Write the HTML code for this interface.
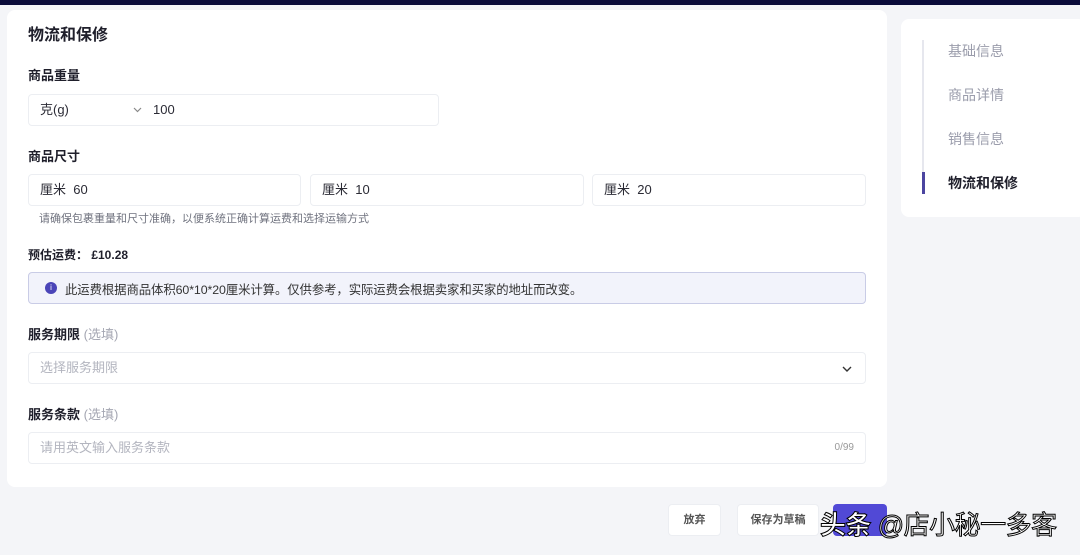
<!DOCTYPE html>
<html><head><meta charset="utf-8"><style>
*{box-sizing:border-box;margin:0;padding:0}
body{width:1080px;height:555px;overflow:hidden;background:#f4f5f8;font-family:"Liberation Sans","Noto Sans CJK SC",sans-serif;color:#222;position:relative}
.top{position:absolute;left:0;top:0;width:1080px;height:5px;background:#0b0c3a}
.card{position:absolute;left:7px;top:10px;width:880px;height:477px;background:#fff;border-radius:8px}
.abs{position:absolute}
h2{position:absolute;left:28px;top:26px;font-size:16px;font-weight:bold;color:#1f1f2b;line-height:20px}
.lbl{position:absolute;left:28px;font-size:13px;font-weight:bold;color:#1f1f2b;line-height:16px}
.lbl span{color:#a4a6b2;font-weight:normal}
.in{position:absolute;height:32px;border:1px solid #eceef2;border-radius:4px;font-size:13px;color:#2b2b35;line-height:30px;padding-left:11px}
.ph{color:#b3b5bf}
.side{position:absolute;left:901px;top:19px;width:185px;height:198px;background:#fff;border-radius:8px}
.nav{position:absolute;left:948px;font-size:14px;color:#9a9cab;line-height:18px}
.btn{position:absolute;top:504px;height:32px;background:#fff;border:1px solid #eceef2;border-radius:4px;font-size:11px;font-weight:bold;color:#555;text-align:center;line-height:30px}
</style></head><body>
<div class="top"></div>
<div class="card"></div>
<h2>物流和保修</h2>
<div class="lbl" style="top:68px">商品重量</div>
<div class="in" style="left:28px;top:94px;width:411px">克(g)<svg class="abs" style="left:104px;top:12px" width="9" height="6" viewBox="0 0 9 6"><path d="M1 1l3.5 3.5L8 1" fill="none" stroke="#888" stroke-width="1.2"/></svg><span class="abs" style="left:124px;top:0">100</span></div>
<div class="lbl" style="top:149px">商品尺寸</div>
<div class="in" style="left:28px;top:174px;width:273px">厘米&nbsp; 60</div>
<div class="in" style="left:310px;top:174px;width:274px">厘米&nbsp; 10</div>
<div class="in" style="left:592px;top:174px;width:274px">厘米&nbsp; 20</div>
<div class="abs" style="left:39px;top:210px;font-size:11px;color:#70737f">请确保包裹重量和尺寸准确，以便系统正确计算运费和选择运输方式</div>
<div class="lbl" style="top:247px;font-size:12px">预估运费： £10.28</div>
<div class="abs" style="left:28px;top:272px;width:838px;height:32px;background:#f2f3fb;border:1px solid #c9cce6;border-radius:4px"></div>
<div class="abs" style="left:45px;top:282px;width:12px;height:12px;border-radius:50%;background:#4b45b8;color:#fff;font-size:8px;text-align:center;line-height:12px">i</div>
<div class="abs" style="left:65px;top:280px;font-size:12.4px;color:#333;letter-spacing:-0.1px">此运费根据商品体积60*10*20厘米计算。仅供参考，实际运费会根据卖家和买家的地址而改变。</div>
<div class="lbl" style="top:327px">服务期限 <span>(选填)</span></div>
<div class="in ph" style="left:28px;top:352px;width:838px">选择服务期限<svg class="abs" style="right:13px;top:13px" width="10" height="6" viewBox="0 0 10 6"><path d="M1 1l4 4 4-4" fill="none" stroke="#333" stroke-width="1.4"/></svg></div>
<div class="lbl" style="top:407px">服务条款 <span>(选填)</span></div>
<div class="in ph" style="left:28px;top:432px;width:838px">请用英文输入服务条款<span class="abs" style="right:11px;top:0;color:#999;font-size:10px">0/99</span></div>
<div class="side"></div>
<div class="abs" style="left:922px;top:40px;width:2px;height:154px;background:#e6e7ee"></div>
<div class="abs" style="left:922px;top:172px;width:3px;height:22px;background:#4b45a0"></div>
<div class="nav" style="top:42px">基础信息</div>
<div class="nav" style="top:86px">商品详情</div>
<div class="nav" style="top:130px">销售信息</div>
<div class="nav" style="top:174px;color:#1f1f2b;font-weight:bold">物流和保修</div>
<div class="btn" style="left:668px;width:53px">放弃</div>
<div class="btn" style="left:737px;width:82px">保存为草稿</div>
<div class="abs" style="left:833px;top:504px;width:54px;height:32px;background:#5149d6;border-radius:4px"></div>
<div class="abs" style="left:820px;top:505px;font-size:26px;color:#fff;-webkit-text-stroke:1px #000;font-weight:bold;white-space:nowrap;letter-spacing:-0.5px">头条 <span style="font-weight:normal">@店小秘一多客</span></div>
</body></html>
